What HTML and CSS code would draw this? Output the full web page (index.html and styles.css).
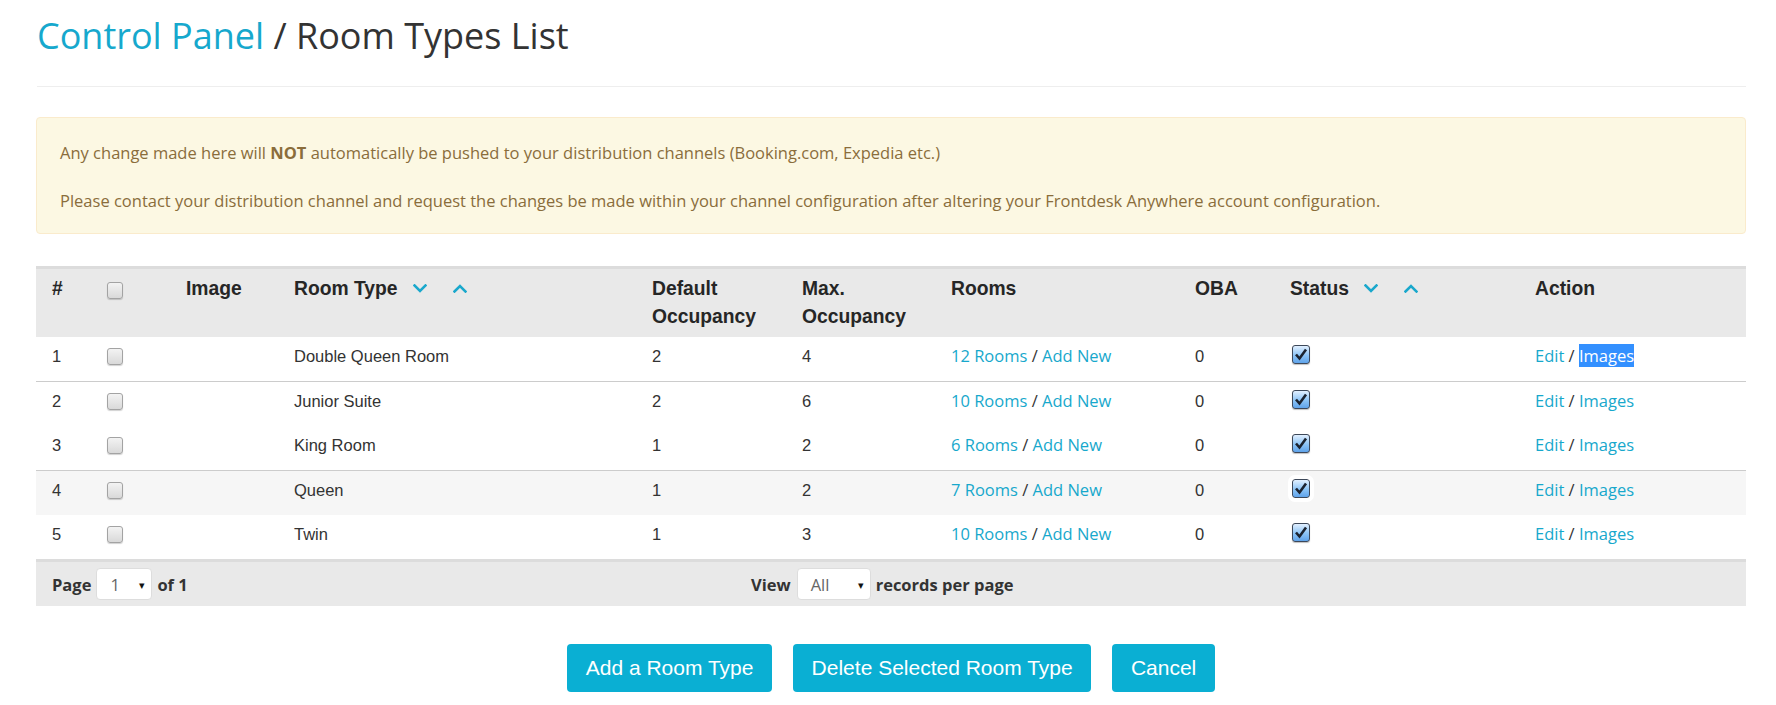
FILE: index.html
```html
<!DOCTYPE html>
<html lang="en">
<head>
<meta charset="utf-8">
<title>Room Types List</title>
<link rel="stylesheet" href="styles.css">
</head>
<body>
<div class="page">
  <h1 class="title"><a href="#" class="crumb">Control Panel</a> / Room Types List</h1>
  <hr class="rule">

  <div class="alert">
    <p>Any change made here will <strong>NOT</strong> automatically be pushed to your distribution channels (Booking.com, Expedia etc.)</p>
    <p>Please contact your distribution channel and request the changes be made within your channel configuration after altering your Frontdesk Anywhere account configuration.</p>
  </div>

  <table class="grid">
    <colgroup>
      <col class="c-num"><col class="c-chk"><col class="c-img"><col class="c-type"><col class="c-def"><col class="c-max"><col class="c-rooms"><col class="c-oba"><col class="c-status"><col class="c-act">
    </colgroup>
    <thead>
      <tr>
        <th>#</th>
        <th><span class="cb cb-head"></span></th>
        <th>Image</th>
        <th>Room Type<span class="sort"><svg class="chev chev-down" width="14" height="9" viewBox="0 0 14 9"><path d="M1.5 1.5 L7 7 L12.5 1.5"/></svg><svg class="chev chev-up" width="14" height="9" viewBox="0 0 14 9"><path d="M1.5 7.5 L7 2 L12.5 7.5"/></svg></span></th>
        <th>Default<br>Occupancy</th>
        <th>Max.<br>Occupancy</th>
        <th>Rooms</th>
        <th>OBA</th>
        <th>Status<span class="sort"><svg class="chev chev-down" width="14" height="9" viewBox="0 0 14 9"><path d="M1.5 1.5 L7 7 L12.5 1.5"/></svg><svg class="chev chev-up" width="14" height="9" viewBox="0 0 14 9"><path d="M1.5 7.5 L7 2 L12.5 7.5"/></svg></span></th>
        <th>Action</th>
      </tr>
    </thead>
    <tbody>
      <tr class="ruled">
        <td>1</td><td><span class="cb"></span></td><td></td><td>Double Queen Room</td><td>2</td><td>4</td>
        <td><span class="links"><a href="#">12 Rooms</a> / <a href="#">Add New</a></span></td><td>0</td>
        <td><span class="chk"><svg width="14" height="13" viewBox="0 0 14 13"><path d="M2 6.5 L5.5 10.5 L12 1.5"/></svg></span></td>
        <td><span class="links"><a href="#">Edit</a> / <a href="#" class="picked">Images</a></span></td>
      </tr>
      <tr>
        <td>2</td><td><span class="cb"></span></td><td></td><td>Junior Suite</td><td>2</td><td>6</td>
        <td><span class="links"><a href="#">10 Rooms</a> / <a href="#">Add New</a></span></td><td>0</td>
        <td><span class="chk"><svg width="14" height="13" viewBox="0 0 14 13"><path d="M2 6.5 L5.5 10.5 L12 1.5"/></svg></span></td>
        <td><span class="links"><a href="#">Edit</a> / <a href="#">Images</a></span></td>
      </tr>
      <tr class="ruled">
        <td>3</td><td><span class="cb"></span></td><td></td><td>King Room</td><td>1</td><td>2</td>
        <td><span class="links"><a href="#">6 Rooms</a> / <a href="#">Add New</a></span></td><td>0</td>
        <td><span class="chk"><svg width="14" height="13" viewBox="0 0 14 13"><path d="M2 6.5 L5.5 10.5 L12 1.5"/></svg></span></td>
        <td><span class="links"><a href="#">Edit</a> / <a href="#">Images</a></span></td>
      </tr>
      <tr class="striped">
        <td>4</td><td><span class="cb"></span></td><td></td><td>Queen</td><td>1</td><td>2</td>
        <td><span class="links"><a href="#">7 Rooms</a> / <a href="#">Add New</a></span></td><td>0</td>
        <td><span class="chk chk-bg"><svg width="14" height="13" viewBox="0 0 14 13"><path d="M2 6.5 L5.5 10.5 L12 1.5"/></svg></span></td>
        <td><span class="links"><a href="#">Edit</a> / <a href="#">Images</a></span></td>
      </tr>
      <tr>
        <td>5</td><td><span class="cb"></span></td><td></td><td>Twin</td><td>1</td><td>3</td>
        <td><span class="links"><a href="#">10 Rooms</a> / <a href="#">Add New</a></span></td><td>0</td>
        <td><span class="chk"><svg width="14" height="13" viewBox="0 0 14 13"><path d="M2 6.5 L5.5 10.5 L12 1.5"/></svg></span></td>
        <td><span class="links"><a href="#">Edit</a> / <a href="#">Images</a></span></td>
      </tr>
    </tbody>
  </table>

  <div class="pager">
    <div class="pager-left">
      <span>Page</span>
      <span class="select select-page"><span class="select-val">1</span><span class="caret">&#9662;</span></span>
      <span>of 1</span>
    </div>
    <div class="pager-view">
      <span>View</span>
      <span class="select select-view"><span class="select-val">All</span><span class="caret">&#9662;</span></span>
      <span>records per page</span>
    </div>
  </div>

  <div class="actions">
    <button class="btn" type="button">Add a Room Type</button>
    <button class="btn" type="button">Delete Selected Room Type</button>
    <button class="btn" type="button">Cancel</button>
  </div>
</div>
</body>
</html>
```
FILE: styles.css
```css
* { box-sizing: border-box; }

body {
  margin: 0;
  background: #fff;
  font-family: "Open Sans", "Liberation Sans", sans-serif;
  font-size: 16.5px;
  color: #333;
}

.page {
  padding: 0 30px 0 36px;
}

.title {
  margin: 0;
  padding: 16px 0 0 1px;
  font-size: 36px;
  line-height: 40px;
  font-weight: 400;
  color: #333;
}

.crumb {
  color: #16a8cd;
  text-decoration: none;
}

.rule {
  border: 0;
  border-top: 1px solid #eee;
  margin: 30px 0 30px 1px;
  height: 0;
}

.alert {
  background: #fcf8e3;
  border: 1px solid #faebcc;
  border-radius: 4px;
  color: #8a6d3b;
  padding: 23px 23px 20px;
  line-height: 24px;
}

.alert p {
  margin: 0;
}

.alert p + p {
  margin-top: 24px;
}

.alert strong {
  font-weight: 700;
}

/* table */
.grid {
  width: 100%;
  margin-top: 32px;
  border-collapse: separate;
  border-spacing: 0;
  table-layout: fixed;
  font-family: "Liberation Sans", Arial, sans-serif;
  font-size: 16.5px;
  color: #333;
}

.c-num { width: 55px; }
.c-chk { width: 79px; }
.c-img { width: 108px; }
.c-type { width: 358px; }
.c-def { width: 150px; }
.c-max { width: 149px; }
.c-rooms { width: 244px; }
.c-oba { width: 95px; }
.c-status { width: 245px; }
.c-act { width: 227px; }

.grid th {
  background: #e9e9e9;
  border-top: 3px solid #dcdcdc;
  font-size: 19.3px;
  font-weight: 700;
  color: #262626;
  text-align: left;
  vertical-align: top;
  padding: 6px 16px 6px;
  line-height: 28px;
  white-space: nowrap;
}

.grid td {
  padding: 7px 16px 13px;
  line-height: 24px;
  vertical-align: top;
  white-space: nowrap;
}

.grid tr.ruled td {
  border-bottom: 1px solid #cccccc;
}

.grid tr.striped td {
  background: #f6f6f6;
}

.sort {
  display: inline-flex;
  gap: 26px;
  margin-left: 15px;
  vertical-align: 2px;
}

.chev {
  display: block;
}

.chev path {
  fill: none;
  stroke: #1aa8cc;
  stroke-width: 2.6;
  stroke-linecap: square;
}

.cb {
  display: block;
  width: 16px;
  height: 17px;
  margin-top: 4px;
  border: 1px solid #a3a3a3;
  border-radius: 3px;
  background: linear-gradient(#f3f3f3, #d9d9d9);
  box-shadow: 0 1px 1px rgba(0, 0, 0, 0.18);
}

.cb-head {
  margin-top: 7px;
}

.chk {
  display: flex;
  align-items: center;
  justify-content: center;
  width: 18px;
  height: 19px;
  margin: 1px 0 0 2px;
  border: 1px solid #3d4859;
  border-radius: 3px;
  background: linear-gradient(#e2f0ff, #8cc4f6 55%, #5fa3ea);
  box-shadow: 0 1px 1px rgba(0, 0, 0, 0.25);
}

.chk-bg {
  outline: 4px solid #fff;
}

.chk path {
  fill: none;
  stroke: #1b2330;
  stroke-width: 2.6;
}

.links {
  font-family: "Open Sans", "Liberation Sans", sans-serif;
  font-size: 16.5px;
  color: #333;
}

.links a {
  color: #17a8cc;
  text-decoration: none;
}

.links a.picked {
  background: #3390ff;
  color: #fff;
}

/* pager */
.pager {
  display: flex;
  align-items: center;
  height: 47px;
  border-top: 3px solid #dcdcdc;
  background: #e9e9e9;
  padding: 0 16px;
  font-weight: 700;
  color: #333;
}

.pager-left {
  display: flex;
  align-items: center;
  width: 699px;
}

.pager-view {
  display: flex;
  align-items: center;
}

.select {
  display: inline-flex;
  align-items: center;
  justify-content: space-between;
  height: 32px;
  background: #fff;
  border: 1px solid #dddddd;
  border-radius: 4px;
  font-weight: 400;
  color: #666;
  padding: 0 6px 0 13px;
}

.select-page {
  width: 56px;
  margin: 0 5px 0 5px;
}

.select-view {
  width: 74px;
  margin: 0 5px 0 6px;
}

.caret {
  font-size: 11px;
  color: #111;
}

/* buttons */
.actions {
  display: flex;
  justify-content: center;
  gap: 21px;
  margin-top: 38px;
}

.btn {
  height: 48px;
  padding: 0 18.6px;
  border: 0;
  border-radius: 4px;
  background: #0aafd3;
  color: #fff;
  font-family: "Liberation Sans", Arial, sans-serif;
  font-size: 21px;
  cursor: pointer;
}
```
